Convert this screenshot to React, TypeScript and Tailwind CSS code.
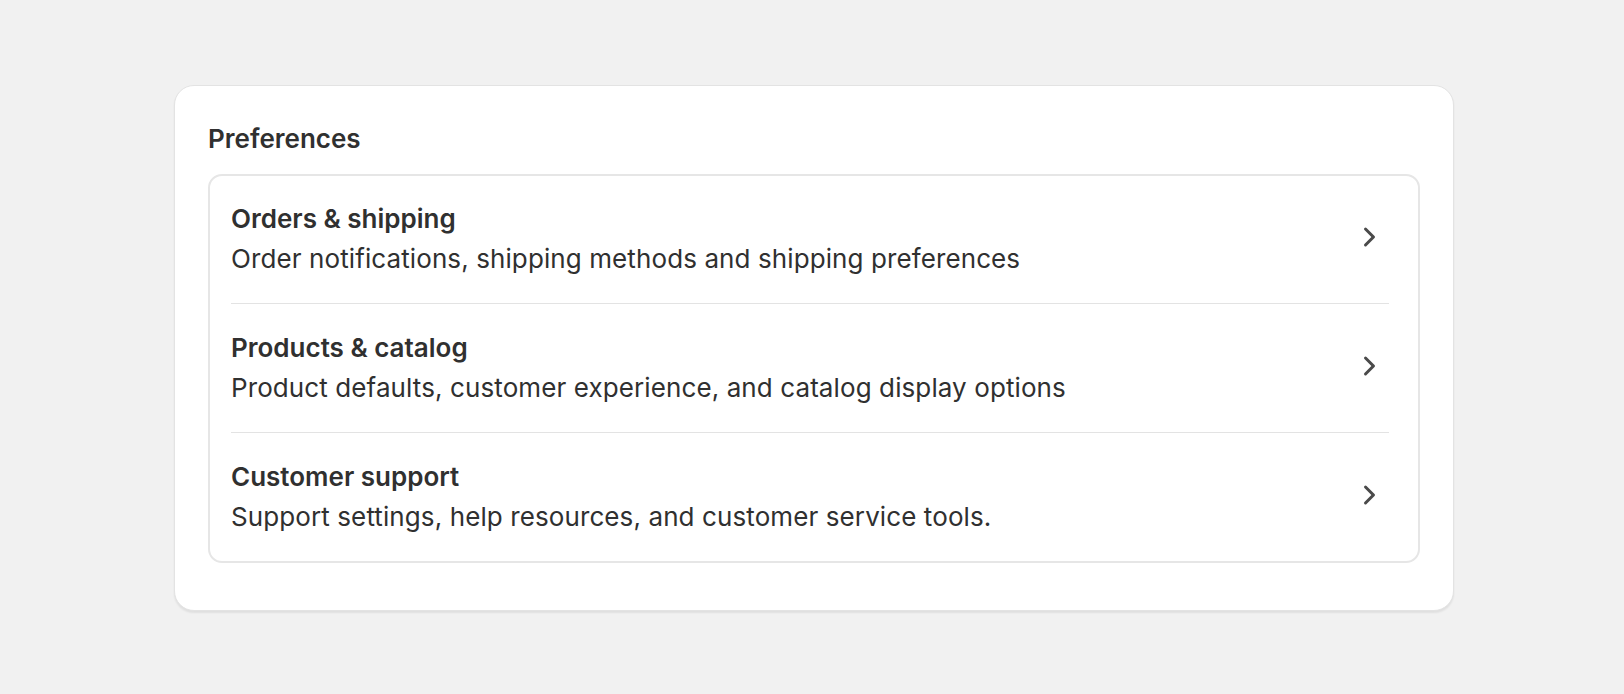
import React from "react";

type Item = { title: string; description: string };

const items: Item[] = [
  {
    title: "Orders & shipping",
    description: "Order notifications, shipping methods and shipping preferences",
  },
  {
    title: "Products & catalog",
    description: "Product defaults, customer experience, and catalog display options",
  },
  {
    title: "Customer support",
    description: "Support settings, help resources, and customer service tools.",
  },
];

function ChevronRight() {
  return (
    <svg viewBox="0 0 20 20" className="w-[40px] h-[40px]" fill="#4a4a4a" aria-hidden="true">
      <path d="M7.72 14.53a.75.75 0 0 1 0-1.06l3.47-3.47-3.47-3.47a.75.75 0 0 1 1.06-1.06l4 4a.75.75 0 0 1 0 1.06l-4 4a.75.75 0 0 1-1.06 0Z" />
    </svg>
  );
}

function Row({ item, first }: { item: Item; first: boolean }) {
  return (
    <div
      className={
        "flex items-center justify-between " +
        (first ? "pt-[23px] pb-6" : "py-6 border-t border-[#e3e3e3]")
      }
    >
      <div className="flex flex-col">
        <span className="text-[26px] leading-[40px] font-semibold text-[#303030]">{item.title}</span>
        <span className="text-[26px] leading-[40px] font-normal text-[#303030] tracking-[0.1px]">{item.description}</span>
      </div>
      <div className="mb-[5px] flex items-center justify-center">
        <ChevronRight />
      </div>
    </div>
  );
}

export default function App() {
  return (
    <div
      className="min-h-screen w-full bg-[#f1f1f1] pt-[85px]"
      style={{ fontFamily: "Inter, 'Noto Sans', sans-serif" }}
    >
      <div className="ml-[174px] w-[1280px] rounded-[20px] border border-[#e3e3e3] bg-white px-[33px] pt-[33px] pb-[47px] shadow-[0_2px_2px_rgba(0,0,0,0.07)]">
        <h2 className="text-[26px] leading-[40px] font-semibold text-[#303030]">Preferences</h2>
        <div className="mt-[15px] rounded-[14px] border-2 border-[#e6e6e6] bg-white pl-[21px] pr-[29px]">
          {items.map((item, i) => (
            <Row key={item.title} item={item} first={i === 0} />
          ))}
        </div>
      </div>
    </div>
  );
}
